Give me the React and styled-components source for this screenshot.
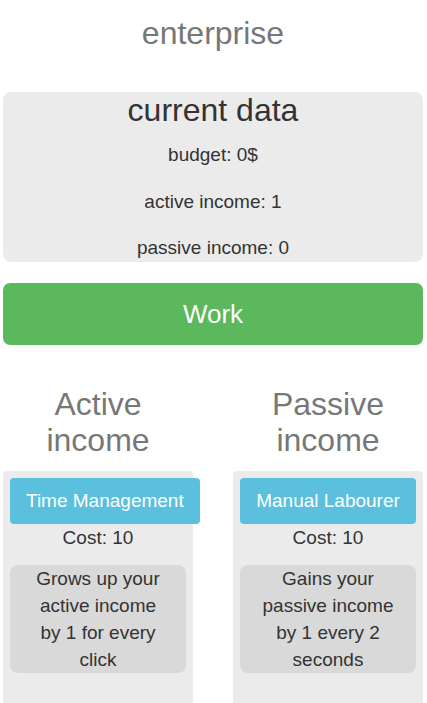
import React from 'react';
import styled, { createGlobalStyle } from 'styled-components';

const GlobalStyle = createGlobalStyle`
  body {
    margin: 0;
    background: #fff;
    font-family: "Liberation Sans", Arial, sans-serif;
    color: #333;
  }
`;

const Page = styled.div`
  width: 420px;
  padding: 15px 3px 0;
  overflow: hidden;
  height: 688px;
`;

const Title = styled.h1`
  margin: 0;
  font-size: 32px;
  font-weight: normal;
  line-height: 36px;
  color: #777;
  text-align: center;
`;

const DataCard = styled.section`
  margin-top: 41px;
  height: 170px;
  overflow: hidden;
  background: #ebebeb;
  border-radius: 8px;
  display: flex;
  flex-direction: column;
  align-items: center;
`;

const DataTitle = styled.h2`
  margin: 0 0 13px;
  font-size: 32px;
  font-weight: normal;
  line-height: 36px;
  color: #333;
`;

const DataRow = styled.p`
  margin: 0 0 18.5px;
  font-size: 19px;
  line-height: 28px;
`;

const WorkButton = styled.button`
  display: block;
  width: 100%;
  height: 62px;
  margin-top: 21px;
  border: none;
  border-radius: 7px;
  background: #5cb85c;
  color: #fff;
  font-family: inherit;
  font-size: 26px;
  cursor: pointer;
`;

const Columns = styled.div`
  display: grid;
  grid-template-columns: 190px 190px;
  column-gap: 40px;
  margin-top: 41px;
`;

const Column = styled.div`
  display: flex;
  flex-direction: column;
`;

const ColumnTitle = styled.h2`
  margin: 0 0 13px;
  font-size: 32px;
  font-weight: normal;
  line-height: 36px;
  color: #777;
  text-align: center;
`;

const Panel = styled.div`
  min-height: 260px;
  box-sizing: border-box;
  background: #ebebeb;
  border-radius: 4px 4px 0 0;
  padding: 7px;
  display: flex;
  flex-direction: column;
  align-items: stretch;
`;

const BuyButton = styled.button`
  display: block;
  min-width: 100%;
  width: max-content;
  height: 46px;
  padding: 0 16px;
  border: none;
  border-radius: 4px;
  background: #5bc0de;
  color: #fff;
  font-family: inherit;
  font-size: 19px;
  white-space: nowrap;
  cursor: pointer;
`;

const Cost = styled.div`
  font-size: 19px;
  line-height: 27px;
  text-align: center;
  margin-bottom: 14px;
`;

const Description = styled.div`
  background: #d9d9d9;
  border-radius: 8px;
  font-size: 19px;
  line-height: 27px;
  text-align: center;
  padding: 0 20px;
`;

const upgrades = [
  {
    heading: ['Active', 'income'],
    name: 'Time Management',
    cost: 10,
    text: 'Grows up your active income by 1 for every click',
  },
  {
    heading: ['Passive', 'income'],
    name: 'Manual Labourer',
    cost: 10,
    text: 'Gains your passive income by 1 every 2 seconds',
  },
];

export default function App() {
  return (
    <>
      <GlobalStyle />
      <Page>
        <Title>enterprise</Title>
        <DataCard>
          <DataTitle>current data</DataTitle>
          <DataRow>budget: 0$</DataRow>
          <DataRow>active income: 1</DataRow>
          <DataRow>passive income: 0</DataRow>
        </DataCard>
        <WorkButton>Work</WorkButton>
        <Columns>
          {upgrades.map((u) => (
            <Column key={u.name}>
              <ColumnTitle>
                {u.heading[0]}
                <br />
                {u.heading[1]}
              </ColumnTitle>
              <Panel>
                <BuyButton>{u.name}</BuyButton>
                <Cost>Cost: {u.cost}</Cost>
                <Description>{u.text}</Description>
              </Panel>
            </Column>
          ))}
        </Columns>
      </Page>
    </>
  );
}
